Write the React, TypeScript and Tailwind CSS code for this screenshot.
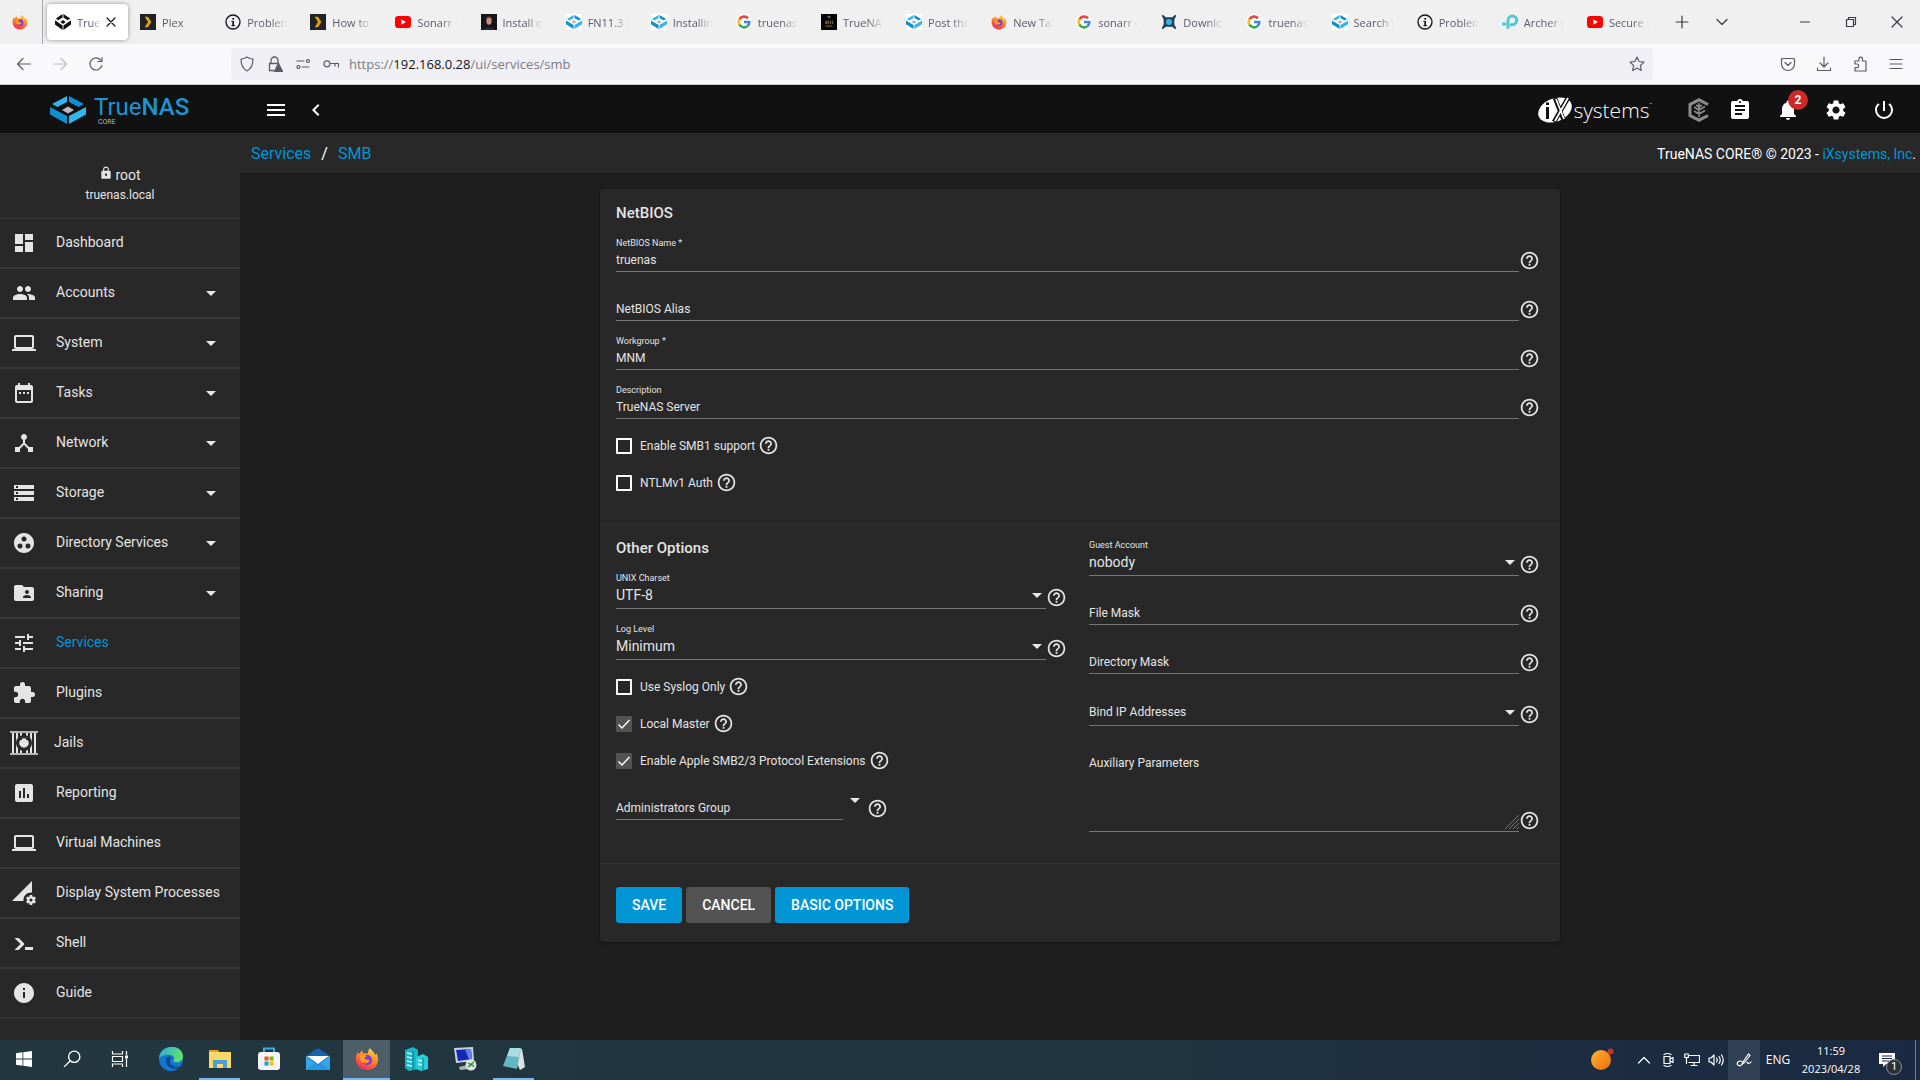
import React, { useState } from 'react'
import {
  MdAssessment, MdAssignment, MdChevronLeft, MdDashboard, MdDateRange, MdDeviceHub, MdExtension,
  MdFolderShared, MdGroupWork, MdHelpOutline, MdInfo, MdLaptop, MdLock, MdMenu, MdNotifications,
  MdPeople, MdPermDataSetting, MdPowerSettingsNew, MdSettings, MdStorage, MdTune,
} from 'react-icons/md'
import type { IconType } from 'react-icons'

/* ---------- logos & small drawings ---------- */

function NasMark({ className, mono }: { className?: string; mono?: boolean }){
  const light = mono ? '#111' : '#31b5ea'
  const dark = mono ? '#111' : '#0d8fd0'
  return (
    <svg viewBox="0 0 36 28" className={className} preserveAspectRatio="none">
      <path d="M17 0v6L7.500 11 2 8z" fill={light} />
      <path d="M19 0v6l9.500 5L34 8z" fill={dark} />
      <path d="M0 11l17 9v8L0 18.500z" fill={dark} />
      <path d="M36 11l-17 9v8l17-9.500z" fill={light} />
      <path d="M18 10.500l6 3.500-6 3.500-6-3.500z" fill={mono ? '#111' : '#b9b9b9'} />
    </svg>
  )
}

function FirefoxIcon({ className }: { className?: string }){
  return (
    <svg viewBox="0 0 24 24" className={className}>
      <defs>
        <linearGradient id="ffx" x1=".8" y1="0" x2=".3" y2="1">
          <stop offset="0" stopColor="#ffe14a" />
          <stop offset=".45" stopColor="#ff8a2a" />
          <stop offset="1" stopColor="#f0285a" />
        </linearGradient>
      </defs>
      <path d="M15 1c1 2 4 4 5.500 7 .8-.4.800-1.500.700-2C24 11 23.500 16 20.500 19.500 15 25 6 24 2.500 18 0 13.500.500 8 3 5c.2 1 .5 1.500 1 2 .8-1.500 2-3 3.500-3.500-.2 1 0 2 .8 3 1.700-.3 3.200-.2 4.200.5C13 5 13.500 2.500 15 1z" fill="url(#ffx)" />
      <circle cx="12" cy="13" r="5" fill="#7a3ce0" />
      <path d="M5 9c2-2 5-1.500 7 .5-2 0-3 1-2 2.500 1.500 1 4 0 4.500 1.500-1 3-5 3.500-7.500 1.500C5.500 13.500 4.500 11 5 9z" fill="#ff9a2a" />
    </svg>
  )
}

function GoogleIcon({ className }: { className?: string }){
  return (
    <svg viewBox="0 0 24 24" className={className} fill="none" strokeWidth="4">
      <circle cx="12" cy="12" r="12" fill="#fff" />
      <path d="M18 6.500A8 8 0 0 0 5.200 8" stroke="#e2483c" />
      <path d="M5.200 7.900a8 8 0 0 0 0 8.200" stroke="#f4bd2c" />
      <path d="M5.200 16A8 8 0 0 0 17 18.300" stroke="#34a853" />
      <path d="M17 18.300A8 8 0 0 0 20 12h-8" stroke="#4285f4" />
    </svg>
  )
}

function YoutubeIcon({ className }: { className?: string }){
  return (
    <svg viewBox="0 0 24 24" className={className}>
      <rect y="3" width="24" height="18" rx="5" fill="#f00" />
      <path d="M9.500 8l7 4-7 4z" fill="#fff" />
    </svg>
  )
}

function PlexIcon({ className }: { className?: string }){
  return (
    <svg viewBox="0 0 24 24" className={className}>
      <path d="M0 0h24v24H0z" fill="#1f2326" />
      <path d="M7 4h5l5 8-5 8H7l5-8z" fill="#e5a00d" />
    </svg>
  )
}

function InfoRing({ className }: { className?: string }){
  return (
    <svg viewBox="0 0 24 24" className={className}>
      <circle cx="12" cy="12" r="10.500" fill="none" stroke="#15141a" strokeWidth="2" />
      <path d="M11 6h2.500v2.500H11zM9.500 10.500h4V17H15v1.500H9.500V17H11v-5H9.500z" fill="#15141a" />
    </svg>
  )
}

function PersonIcon({ className }: { className?: string }){
  return (
    <svg viewBox="0 0 24 24" className={className}>
      <path d="M0 0h24v24H0z" fill="#15151c" />
      <ellipse cx="12" cy="10" rx="4" ry="6" fill="#c98e77" />
      <path d="M7 8c0-7 10-7 10 0-2-3-8-3-10 0z" fill="#4a2a20" />
      <path d="M4 24c1-6 15-6 16 0z" fill="#26263a" />
    </svg>
  )
}

function ForumIcon({ className }: { className?: string }){
  return (
    <svg viewBox="0 0 24 24" className={className} stroke="#a98a45" strokeWidth="1.200" fill="none">
      <path d="M0 0h24v24H0z" fill="#050505" stroke="none" />
      <path d="M10 4l2-1 2 1-2 2zM7 11h2v3H7zM11 10v5M14 10v5M17 10v5M7 18h10" />
    </svg>
  )
}

function SnipIcon({ className }: { className?: string }){
  return (
    <svg viewBox="0 0 24 24" className={className}>
      <path d="M2 2l5 4h10l5-4-3 6v8l3 6-5-4H7l-5 4 3-6V8z" fill="#25405c" stroke="#25405c" strokeWidth="2" />
      <circle cx="12" cy="12" r="4.500" fill="#35b7e8" />
    </svg>
  )
}

function TpIcon({ className }: { className?: string }){
  return (
    <svg viewBox="0 0 24 24" className={className} fill="none" stroke="#4acbd6" strokeWidth="4.500">
      <path d="M9 22V9.500a6.500 6.500 0 1 1 6.500 6.500H12" />
      <path d="M0 15h6" />
    </svg>
  )
}

function WhiteNas({ className }: { className?: string }){
  return <span className={`flex items-center bg-white ${className}`}><NasMark className="h-3.5 w-4" /></span>
}

function ShellIcon({ className }: { className?: string }){
  return (
    <svg viewBox="0 0 24 24" className={className} fill="currentColor">
      <path d="M13 19v-3h8v3zM8.500 13L2.500 7h4.200l5.300 5.300c.4.400.400 1 0 1.400L6.700 19H2.500z" />
    </svg>
  )
}

function JailIcon({ className }: { className?: string }){
  return (
    <svg viewBox="0 0 28 24" className={className} stroke="currentColor" fill="none">
      <path d="M0 1h28M0 23h28" strokeWidth="1.500" />
      <path d="M3 2v20M7 2v20M11 2v20M17 2v20M21 2v20M25 2v20" strokeWidth="2" />
      <circle cx="14" cy="12" r="7" fill="#d0d0d0" stroke="#282828" strokeWidth="2" />
      <circle cx="14" cy="12" r="5.500" fill="currentColor" stroke="#282828" strokeWidth="1.500" />
      <path d="M9 7l3 1.500M19 7l-3 1.500" stroke="#282828" strokeWidth="1.500" />
    </svg>
  )
}

function Caret({ className }: { className?: string }){
  return <svg viewBox="0 0 10 5" className={`h-[5px] w-[10px] ${className ?? ''}`} fill="#e8e8e8"><path d="M0 0h10L5 5z" /></svg>
}

/* ---------- browser chrome ---------- */

type Tab = { title: string; icon: React.FC<{ className?: string }> }

const TABS: Tab[] = [
  { title: 'Plex', icon: PlexIcon },
  { title: 'Problem', icon: InfoRing },
  { title: 'How to i', icon: PlexIcon },
  { title: 'Sonarr C', icon: YoutubeIcon },
  { title: 'Install qb', icon: PersonIcon },
  { title: 'FN11.3 is', icon: WhiteNas },
  { title: 'Installing', icon: WhiteNas },
  { title: 'truenas', icon: GoogleIcon },
  { title: 'TrueNAS', icon: ForumIcon },
  { title: 'Post thre', icon: WhiteNas },
  { title: 'New Tab', icon: FirefoxIcon },
  { title: 'sonarr d', icon: GoogleIcon },
  { title: 'Downloa', icon: SnipIcon },
  { title: 'truenas', icon: GoogleIcon },
  { title: 'Search r', icon: WhiteNas },
  { title: 'Problem', icon: InfoRing },
  { title: 'Archer C', icon: TpIcon },
  { title: 'Secure H', icon: YoutubeIcon },
]

const FADE = 'overflow-hidden whitespace-nowrap pt-0.5 [mask-image:linear-gradient(to_right,black_60%,transparent)]'

function Stroke({ d, className }: { d: string; className?: string }){
  return (
    <svg viewBox="0 0 16 16" className={`h-4 w-4 ${className ?? ''}`} fill="none" stroke="currentColor" strokeWidth="1.200" strokeLinecap="round" strokeLinejoin="round">
      <path d={d} />
    </svg>
  )
}

function TabStrip(){
  return (
    <div className="flex h-11 bg-[#f0f0f0] text-[11px] text-[#5b5b66]">
      <button aria-label="Pinned tab" className="flex w-[43px] items-center border-r border-[#a8a8ad] pl-3"><FirefoxIcon className="h-4 w-4" /></button>
      <div className="grid min-w-0 flex-1 auto-cols-fr grid-flow-col pl-1">
        <div className="flex min-w-0 items-center">
          <div className="flex h-9 w-[81px] shrink-0 items-center rounded bg-white pl-2 shadow-[0_0_4px_rgba(0,0,0,0.4)]">
            <NasMark mono className="h-4 w-4 shrink-0" />
            <span className={`ml-1.5 w-6 ${FADE}`}>TrueNAS</span>
            <button aria-label="Close tab" className="ml-0.5 text-[#15141a]"><Stroke d="M4 4l8 8M12 4l-8 8" /></button>
          </div>
        </div>
        {TABS.map((t, i)=> (
          <button key={i} className="flex min-w-0 items-center pl-2 text-left">
            <t.icon className="h-4 w-4 shrink-0" />
            <span className={`ml-1.5 w-10 ${FADE}`}>{t.title}</span>
          </button>
        ))}
      </div>
      <div className="flex w-[256px] items-center text-[#3b3b44]">
        <button aria-label="New tab" className="ml-2.5"><Stroke d="M8 2v12M2 8h12" /></button>
        <button aria-label="List tabs" className="ml-6"><Stroke d="M3 5.500l5 5 5-5" /></button>
        <button aria-label="Minimize" className="ml-[67px]"><Stroke d="M3.500 8h9" /></button>
        <button aria-label="Restore" className="ml-[30px]"><Stroke d="M3.500 5.500h7v7h-7zM5.500 5.500v-2h7v7h-2" /></button>
        <button aria-label="Close" className="ml-[30px]"><Stroke d="M3 3l10 10M13 3L3 13" /></button>
      </div>
    </div>
  )
}

function NavBar(){
  return (
    <div className="flex h-[41px] items-center border-b border-[#ccc] bg-[#f9f9fb] text-[#5b5b66]">
      <div className="flex w-[231px] gap-5 pl-4">
        <button aria-label="Back"><Stroke d="M14.500 8h-13M7 2.500L1.500 8 7 13.500" /></button>
        <button aria-label="Forward" className="text-[#bdbdc4]"><Stroke d="M1.500 8h13M9 2.500L14.500 8 9 13.500" /></button>
        <button aria-label="Reload"><Stroke d="M13.800 9.500A6 6 0 1 1 12.500 4M14 1.500v4h-4" /></button>
      </div>
      <div className="flex h-8 min-w-0 flex-1 items-center rounded bg-[#f0f0f4] px-2">
        <Stroke d="M8 1c2 1.500 4 2 6 2 0 6-1.500 9.500-6 12-4.500-2.500-6-6-6-12 2 0 4-.5 6-2z" />
        <svg viewBox="0 0 16 16" className="ml-3 h-4 w-4" fill="none" stroke="currentColor" strokeWidth="1.300">
          <path d="M4 7V4.500a3.500 3.500 0 0 1 7 0V7M7 14.500H2.500v-7h9" />
          <path d="M11.500 7.500l4 8h-8z" fill="currentColor" />
        </svg>
        <Stroke d="M2 5h7M13 3.500a1.500 1.500 0 1 1-.1 3 1.500 1.500 0 0 1 .1-3zM7 11h7M3.500 9.500a1.500 1.500 0 1 1-.1 3 1.500 1.500 0 0 1 .1-3z" className="ml-3" />
        <Stroke d="M4 4.800a3 3 0 1 1-.1 6 3 3 0 0 1 .1-6zM7 7.500h8.500V11M12 7.500V10" className="ml-3" />
        <div role="textbox" aria-label="Address" className="ml-2.5 flex-1 pt-0.5 text-[13px] text-[#7b7b85]">https://<span className="text-[#15141a]">192.168.0.28</span>/ui/services/smb</div>
        <button aria-label="Bookmark"><Stroke d="M8 1l2.100 4.500 4.900.6-3.600 3.400.9 4.900L8 12l-4.300 2.400.9-4.900L1 6.100l4.900-.6z" /></button>
      </div>
      <div className="flex w-[267px] justify-end gap-5 pr-4">
        <button aria-label="Pocket"><Stroke d="M2.500 2.500h11a1 1 0 0 1 1 1V8a6.500 6.500 0 0 1-13 0V3.500a1 1 0 0 1 1-1zM5 6.500l3 3 3-3" /></button>
        <button aria-label="Downloads"><Stroke d="M8 1v9.500M4 7l4 4 4-4M1.500 12v2.500h13V12" /></button>
        <button aria-label="Extensions"><Stroke d="M3 15h11V5h-3.500V3a1.800 1.800 0 0 0-3.600 0v2H3v3h2a1.800 1.800 0 0 1 0 3.600H3z" /></button>
        <button aria-label="Menu"><Stroke d="M2 3.500h12M2 8h12M2 12.500h12" /></button>
      </div>
    </div>
  )
}

/* ---------- TrueNAS shell ---------- */

function TopBar(){
  return (
    <header className="flex h-12 items-center bg-[#111] pt-0.5 text-white">
      <a href="#home" className="flex w-60 items-center pl-[50px]">
        <NasMark className="h-7 w-9" />
        <span className="ml-2 flex flex-col text-[#1b95d2]">
          <span className="text-[24px] leading-6">True<span className="font-medium">NAS</span></span>
          <span className="pl-1 text-[7px] leading-[7px] text-[#b5b5b5]">CORE</span>
        </span>
      </a>
      <button aria-label="Toggle menu" className="ml-6"><MdMenu size={24} /></button>
      <button aria-label="Collapse" className="ml-4"><MdChevronLeft size={24} /></button>
      <div className="ml-auto flex items-center">
        <a href="#ix" aria-label="iXsystems" className="flex items-center">
          <svg viewBox="0 0 36 28" className="h-7 w-9">
            <ellipse cx="18" cy="14" rx="17.500" ry="11.500" transform="rotate(-22 18 14)" fill="#fff" />
            <path d="M18 2l9 23M31 2L17 26" stroke="#111" strokeWidth="4.500" />
            <path d="M19 3l8 20M31 2L18 25" stroke="#fff" strokeWidth="1.800" />
            <path d="M10.500 11v12M10.500 6.500V9" stroke="#111" strokeWidth="3" />
          </svg>
          <span className="font-['Open_Sans',sans-serif] text-[21px] font-light leading-7">systems</span>
          <span className="self-start pt-1.5 text-[4px]">™</span>
        </a>
        <button aria-label="TrueCommand" className="ml-9">
          <svg viewBox="0 0 22 24" className="h-6 w-[22px]" fill="none" stroke="#8c8c8c">
            <path d="M20 6.500L11 1.800 2 6.500v11l9 4.700 9-4.700" strokeWidth="3" />
            <path d="M11 5v14M6 9l5 3 6-3.500M6 13l5 3 6-3.500M8 7l3 2 3-2" strokeWidth="1.600" />
          </svg>
        </button>
        <button aria-label="Tasks" className="ml-[18px]"><MdAssignment size={24} /></button>
        <button aria-label="Alerts" className="relative ml-6">
          <MdNotifications size={24} />
          <span className="absolute -top-2 left-3 flex h-5 w-5 items-center justify-center rounded-full bg-[#ce2929] text-[12px] font-bold">2</span>
        </button>
        <button aria-label="Settings" className="ml-6"><MdSettings size={24} /></button>
        <button aria-label="Power" className="ml-6 mr-6"><MdPowerSettingsNew size={24} /></button>
      </div>
    </header>
  )
}

type NavItem = { label: string; icon: IconType | React.FC<{ className?: string }>; sub?: boolean; wide?: boolean }

const NAV: NavItem[] = [
  { label: 'Dashboard', icon: MdDashboard },
  { label: 'Accounts', icon: MdPeople, sub: true },
  { label: 'System', icon: MdLaptop, sub: true },
  { label: 'Tasks', icon: MdDateRange, sub: true },
  { label: 'Network', icon: MdDeviceHub, sub: true },
  { label: 'Storage', icon: MdStorage, sub: true },
  { label: 'Directory Services', icon: MdGroupWork, sub: true },
  { label: 'Sharing', icon: MdFolderShared, sub: true },
  { label: 'Services', icon: MdTune },
  { label: 'Plugins', icon: MdExtension },
  { label: 'Jails', icon: JailIcon, wide: true },
  { label: 'Reporting', icon: MdAssessment },
  { label: 'Virtual Machines', icon: MdLaptop },
  { label: 'Display System Processes', icon: MdPermDataSetting },
  { label: 'Shell', icon: ShellIcon },
  { label: 'Guide', icon: MdInfo },
]

function Sidebar(){
  return (
    <aside className="w-60 shrink-0 bg-[#282828] text-[14px] text-[#e4e4e4]">
      <div className="flex h-[85px] flex-col items-center pt-8">
        <div className="flex h-5 items-center gap-0.5"><MdLock size={14} className="mb-1" />root</div>
        <div className="text-[12px] leading-5">truenas.local</div>
      </div>
      <nav>
        {NAV.map(n=> (
          <a key={n.label} href={`#${n.label}`} className="flex h-[50px] items-center border-y border-[#383838]">
            <span className="flex w-12 justify-center"><n.icon className={n.wide ? 'h-6 w-7' : 'h-6 w-6'} /></span>
            <span className={`flex-1 pb-0.5 ${n.wide ? 'pl-1.5' : 'pl-2'} ${n.label === 'Services' ? 'text-[#0095d5]' : ''}`}>{n.label}</span>
            {n.sub && <Caret className="mr-6" />}
          </a>
        ))}
      </nav>
    </aside>
  )
}

/* ---------- form ---------- */

const FLOATED = 'absolute left-0 top-[15px] text-[9px] leading-[11px]'

function Help(){
  return <MdHelpOutline size={21} className="shrink-0" />
}

function TextField({ id, label, value = '' }: { id: string; label: string; value?: string }){
  const [v, setV] = useState(value)
  return (
    <div className="flex h-[49px] items-end">
      <div className="relative flex h-full flex-1 items-end border-b border-[#757575]">
        <label htmlFor={id} className={v ? FLOATED : 'absolute bottom-0 left-0 leading-[21px]'}>{label}</label>
        <input id={id} value={v} onChange={e=>setV(e.target.value)} className="h-[23px] w-full bg-transparent outline-none" />
      </div>
      <span className="pb-px"><Help /></span>
    </div>
  )
}

function SelectField({ id, label, value = '' }: { id: string; label: string; value?: string }){
  return (
    <div className="flex h-[51px] items-end">
      <div className="relative flex h-full flex-1 items-end border-b border-[#757575]">
        <label htmlFor={id} className={value ? FLOATED : 'absolute bottom-[2px] left-0 leading-[21px]'}>{label}</label>
        <select id={id} defaultValue={value} className="h-[25px] w-full appearance-none bg-transparent text-[14px] outline-none">
          <option value={value}>{value}</option>
        </select>
        <Caret className="pointer-events-none absolute bottom-[10px] right-1" />
      </div>
      <span className="pb-px"><Help /></span>
    </div>
  )
}

function Check({ label, on = false }: { label: string; on?: boolean }){
  const [checked, setChecked] = useState(on)
  return (
    <div className="flex h-[37px] items-center">
      <label className="flex items-center gap-2">
        <span className={`flex h-4 w-4 items-center justify-center rounded-[1px] ${checked ? 'bg-[#535353]' : 'border-2 border-white'}`}>
          <input type="checkbox" checked={checked} onChange={e=>setChecked(e.target.checked)} className="absolute h-4 w-4 appearance-none" />
          {checked && <svg viewBox="0 0 16 16" className="h-4 w-4" fill="none" stroke="#fff" strokeWidth="1.400"><path d="M2.500 8.500l3.500 3.500 7.500-8" /></svg>}
        </span>
        {label}
      </label>
      <span className="pl-[3px]"><Help /></span>
    </div>
  )
}

function SmbForm(){
  return (
    <form className="mx-auto mt-4 w-full max-w-[960px] rounded bg-[#282828] text-[12px] text-[#e4e4e4] shadow-[0_1px_3px_rgba(0,0,0,0.4)]" onSubmit={e=>e.preventDefault()}>
      <section className="pb-[23px] pl-4 pr-5 pt-[14px]">
        <h2 className="text-[15px] font-medium leading-5">NetBIOS</h2>
        <TextField id="name" label="NetBIOS Name *" value="truenas" />
        <TextField id="alias" label="NetBIOS Alias" />
        <TextField id="workgroup" label="Workgroup *" value="MNM" />
        <TextField id="description" label="Description" value="TrueNAS Server" />
        <div className="mt-2">
          <Check label="Enable SMB1 support" />
          <Check label="NTLMv1 Auth" />
        </div>
      </section>
      <section className="grid grid-cols-2 gap-x-[22px] border-t border-[#333] pl-4 pr-5">
        <div className="pb-[43px] pt-[13px]">
          <h2 className="text-[15px] font-medium leading-5">Other Options</h2>
          <SelectField id="charset" label="UNIX Charset" value="UTF-8" />
          <SelectField id="loglevel" label="Log Level" value="Minimum" />
          <div className="mt-2">
            <Check label="Use Syslog Only" />
            <Check label="Local Master" on />
            <Check label="Enable Apple SMB2/3 Protocol Extensions" on />
          </div>
          <div className="flex h-[41px] items-end">
            <div className="relative w-[227px] border-b border-[#757575]">
              <label htmlFor="admins" className="absolute left-0 top-0 leading-6">Administrators Group</label>
              <input id="admins" className="block h-[23px] w-full bg-transparent outline-none" />
            </div>
            <button type="button" aria-label="Open groups" className="mb-[17px] ml-[7px]"><Caret /></button>
            <span className="ml-[7px] pb-px"><Help /></span>
          </div>
        </div>
        <div>
          <SelectField id="guest" label="Guest Account" value="nobody" />
          <TextField id="filemask" label="File Mask" />
          <TextField id="dirmask" label="Directory Mask" />
          <div className="pt-px">
            <SelectField id="bindip" label="Bind IP Addresses" />
          </div>
          <div className="flex h-[106px] items-end">
            <div className="relative flex h-full flex-1 items-end border-b border-[#757575]">
              <label htmlFor="aux" className="absolute left-0 top-[26px] leading-[23px]">Auxiliary Parameters</label>
              <textarea id="aux" className="h-14 w-full resize-none bg-transparent outline-none" />
              <svg viewBox="0 0 14 14" className="pointer-events-none absolute bottom-[2px] right-0 h-[14px] w-[14px]" stroke="#8a8a8a" strokeWidth=".8">
                <path d="M0 14L14 0M4 14L14 4M8 14l6-6M12 14l2-2" />
              </svg>
            </div>
            <span className="pb-px"><Help /></span>
          </div>
        </div>
      </section>
      <div className="flex gap-1 border-t border-[#333] pb-[19px] pl-4 pt-[23px] text-[14px] font-medium text-white">
        <button type="submit" className="h-9 rounded-[3px] bg-[#0095d5] px-4">SAVE</button>
        <button type="button" className="h-9 rounded-[3px] bg-[#535353] px-4">CANCEL</button>
        <button type="button" className="h-9 rounded-[3px] bg-[#0095d5] px-4">BASIC OPTIONS</button>
      </div>
    </form>
  )
}

/* ---------- windows taskbar ---------- */

const TASK_STATE = {
  idle: 'w-[49px] border-transparent',
  small: 'w-12 border-transparent',
  open: 'mx-1 w-[41px] border-[#76b9ed]',
  active: 'mx-px w-[47px] border-[#76b9ed] bg-[#4c5f69]',
}

function TaskButton({ label, state = 'idle', children }: { label: string; state?: keyof typeof TASK_STATE; children: React.ReactNode }){
  return (
    <button aria-label={label} className={`flex h-full items-center justify-center border-b-2 ${TASK_STATE[state]}`}>
      {children}
    </button>
  )
}

function Taskbar(){
  return (
    <footer className="flex h-10 items-center bg-linear-to-r from-[#22373f] via-[#20353f] to-[#1a2942] text-white">
      <div className="flex h-full pr-0.5">
        <TaskButton label="Start" state="small">
          <svg viewBox="0 0 16 16" className="h-4 w-4" fill="#fff"><path d="M0 2.200l6.500-.9v6.300H0zM7.300 1.200L16 0v7.600H7.300zM0 8.400h6.500v6.300L0 13.800zM7.300 8.400H16V16l-8.700-1.200z" /></svg>
        </TaskButton>
        <TaskButton label="Search" state="small">
          <svg viewBox="0 0 16 16" className="h-[18px] w-[18px]" fill="none" stroke="#fff" strokeWidth="1.200"><circle cx="10" cy="6" r="5" /><path d="M6.500 9.500L1 15" /></svg>
        </TaskButton>
        <TaskButton label="Task view" state="small">
          <svg viewBox="0 0 18 18" className="h-[18px] w-[18px]" fill="none" stroke="#fff" strokeWidth="1.200"><path d="M1.500 1v3h10V1M1.500 17v-3h10v3M1.500 6.500h10v5h-10zM15.500 1v4M15.500 9v8" /><path d="M14 5.500h3v3h-3z" fill="#fff" stroke="none" /></svg>
        </TaskButton>
      </div>
      <TaskButton label="Edge">
        <svg viewBox="0 0 24 24" className="h-6 w-6">
          <defs><linearGradient id="edge" x1="0" y1="0" x2="1" y2=".3"><stop offset="0" stopColor="#2aa7e8" /><stop offset="1" stopColor="#5fe06a" /></linearGradient></defs>
          <circle cx="12" cy="12" r="12" fill="#1577cf" />
          <path d="M0 11C1-3 23-4 24 9c0 5-4 7-8 6-2-.5-2-1.500-1-2.500C17 8 7 5 0 11z" fill="url(#edge)" />
          <path d="M7 12c-1 6 4 10 10 10 2 0 4-1 5-3-5 2-11 0-11-5 0-2 1-3 2-3-2-2-5-2-6 1z" fill="#0c4a94" />
        </svg>
      </TaskButton>
      <TaskButton label="File Explorer" state="open">
        <svg viewBox="0 0 24 24" className="h-6 w-6">
          <path d="M1 3h9l2 3H1z" fill="#e8a21c" /><path d="M1 5h22v16H1z" fill="#fbd867" />
          <path d="M5 21v-8h14v8h-4v-4H9v4z" fill="#4b9fd8" />
        </svg>
      </TaskButton>
      <TaskButton label="Microsoft Store">
        <svg viewBox="0 0 24 24" className="h-6 w-6">
          <path d="M7 6V1.500h10V6" fill="none" stroke="#35b0e8" strokeWidth="2" /><rect x="1" y="5" width="22" height="18" rx="3" fill="#f4f4f4" />
          <path d="M7.500 9.500h4v4h-4z" fill="#f25022" /><path d="M12.500 9.500h4v4h-4z" fill="#7fba00" /><path d="M7.500 14.500h4v4h-4z" fill="#00a4ef" /><path d="M12.500 14.500h4v4h-4z" fill="#ffb900" />
        </svg>
      </TaskButton>
      <TaskButton label="Mail">
        <svg viewBox="0 0 24 24" className="h-6 w-6">
          <path d="M0 9l12-8 12 8v14H0z" fill="#1463ad" /><path d="M0 9l12 9 12-9v14H0z" fill="#32a7ec" /><path d="M0 23l12-9 12 9z" fill="#1c8ade" opacity=".6" /><path d="M1 9h22l-11 8z" fill="#fff" />
        </svg>
      </TaskButton>
      <TaskButton label="Firefox" state="active"><FirefoxIcon className="h-6 w-6" /></TaskButton>
      <TaskButton label="Server Manager">
        <svg viewBox="0 0 24 24" className="h-6 w-6">
          <path d="M1 3l8-3 5 3v19l-9 2-4-3z" fill="#18b4c4" /><path d="M12 10l7-3 5 3v12l-7 2-5-2z" fill="#26cfdc" />
          <path d="M3 6l5 1M3 10l5 1M3 14l5 1M3 18l5 1M14 13l4 1M14 17l4 1" stroke="#d8fbff" strokeWidth="1.500" /><path d="M9 4v19M19 11v12" stroke="#0b7f90" />
        </svg>
      </TaskButton>
      <TaskButton label="Remote Desktop">
        <svg viewBox="0 0 24 24" className="h-6 w-6">
          <path d="M1 1l19-1 1 14-18 2z" fill="#c9d3dd" /><path d="M3 3l15-1 1 10-14 2z" fill="#1527b8" /><path d="M12 2.400l6-.4 1 10-3 .5z" fill="#5f80ea" />
          <path d="M6 20l8-2 2 4-9 1z" fill="#aab4be" /><circle cx="18" cy="18" r="5.500" fill="#dde5dd" /><path d="M15 16l3 2-3 2M21 15l-3 2 3 2.500" stroke="#2b8a3c" fill="none" strokeWidth="1.300" />
        </svg>
      </TaskButton>
      <TaskButton label="Notepad" state="open">
        <svg viewBox="0 0 24 24" className="h-6 w-6">
          <path d="M8 2l12 0 3 18-5 3z" fill="#d9e2e4" /><path d="M8 1h11l-4 21-14-3z" fill="#63b6c3" /><path d="M8 1h11l-2 9L5 9z" fill="#a9dde3" />
        </svg>
      </TaskButton>
      <div className="ml-auto flex h-full items-center">
        <svg viewBox="0 0 24 24" className="mr-[22px] h-6 w-6">
          <defs><linearGradient id="sun" x1="0" y1="0" x2="1" y2="1"><stop offset="0" stopColor="#ffb52e" /><stop offset="1" stopColor="#ef6c10" /></linearGradient></defs>
          <circle cx="11" cy="12" r="10" fill="url(#sun)" /><circle cx="20.500" cy="3.500" r="3" fill="#c8322b" />
        </svg>
        <Stroke d="M2.500 11L8 5.500l5.500 5.500" className="mr-2" />
        <Stroke d="M4 4.500h6v7H4zM10 7l3-1.500v5L10 9M4 2.500q3.500-2 7 0M4 13.500q3.500 2 7 0" className="mr-2" />
        <Stroke d="M5 3.500h10.500v7H5M10 10.500v3M7 13.500h6M.8 2h3.500v3.500H.8zM2.500 5.500v6" className="mr-2" />
        <Stroke d="M1 6h2l3-3v10l-3-3H1zM8.500 6q1.500 2 0 4M11 4.500q2.500 3.500 0 7M13.500 3q3.500 5 0 10" className="mr-1" />
        <span className="flex h-full w-8 items-center justify-center bg-[#324056]">
          <Stroke d="M7 10l5.500-8 1.500 1.500-6 7.500-2 1zM6 9.500C3 8 .5 10.500 1.500 12.500S6 14 7 11M11 10c0 2 3 1.500 4 0" />
        </span>
        <span className="w-9 text-center font-['Open_Sans',sans-serif] text-[12px]">ENG</span>
        <span className="w-[70px] text-center font-['Open_Sans',sans-serif] text-[11px] leading-[18px]">11:59<br />2023/04/28</span>
        <button aria-label="Notifications" className="relative ml-3 mr-[19px]">
          <svg viewBox="0 0 18 18" className="h-[18px] w-[18px]"><path d="M1 2h16v11H8l-3 3v-3H1z" fill="#fff" /><path d="M4 5h10M4 7.500h10M4 10h7" stroke="#1a2942" /></svg>
          <span className="absolute left-2 top-2 flex h-4 w-4 items-center justify-center rounded-full border border-[#8b8f96] bg-[#2c3036] text-[11px]">1</span>
        </button>
        <span className="mr-1 h-full w-px bg-[#71809a]" />
      </div>
    </footer>
  )
}

export default function App(){
  return (
    <div className="flex min-h-screen flex-col bg-[#1e1e1e] font-[Roboto,sans-serif]">
      <div className="font-['Open_Sans',sans-serif]">
        <TabStrip />
        <NavBar />
      </div>
      <TopBar />
      <div className="flex flex-1">
        <Sidebar />
        <main className="min-w-0 flex-1">
          <div className="flex h-10 items-center justify-between bg-[#282828] pl-[11px] pr-1 pt-0.5 text-white">
            <div className="flex gap-2.5 text-[16px]">
              <a href="#services" className="text-[#0095d5]">Services</a>
              <span>/</span>
              <a href="#smb" className="text-[#0095d5]">SMB</a>
            </div>
            <div className="text-[14px]">TrueNAS CORE® © 2023 - <a href="#ix" className="text-[#0095d5]">iXsystems, Inc</a>.</div>
          </div>
          <SmbForm />
        </main>
      </div>
      <Taskbar />
    </div>
  )
}
